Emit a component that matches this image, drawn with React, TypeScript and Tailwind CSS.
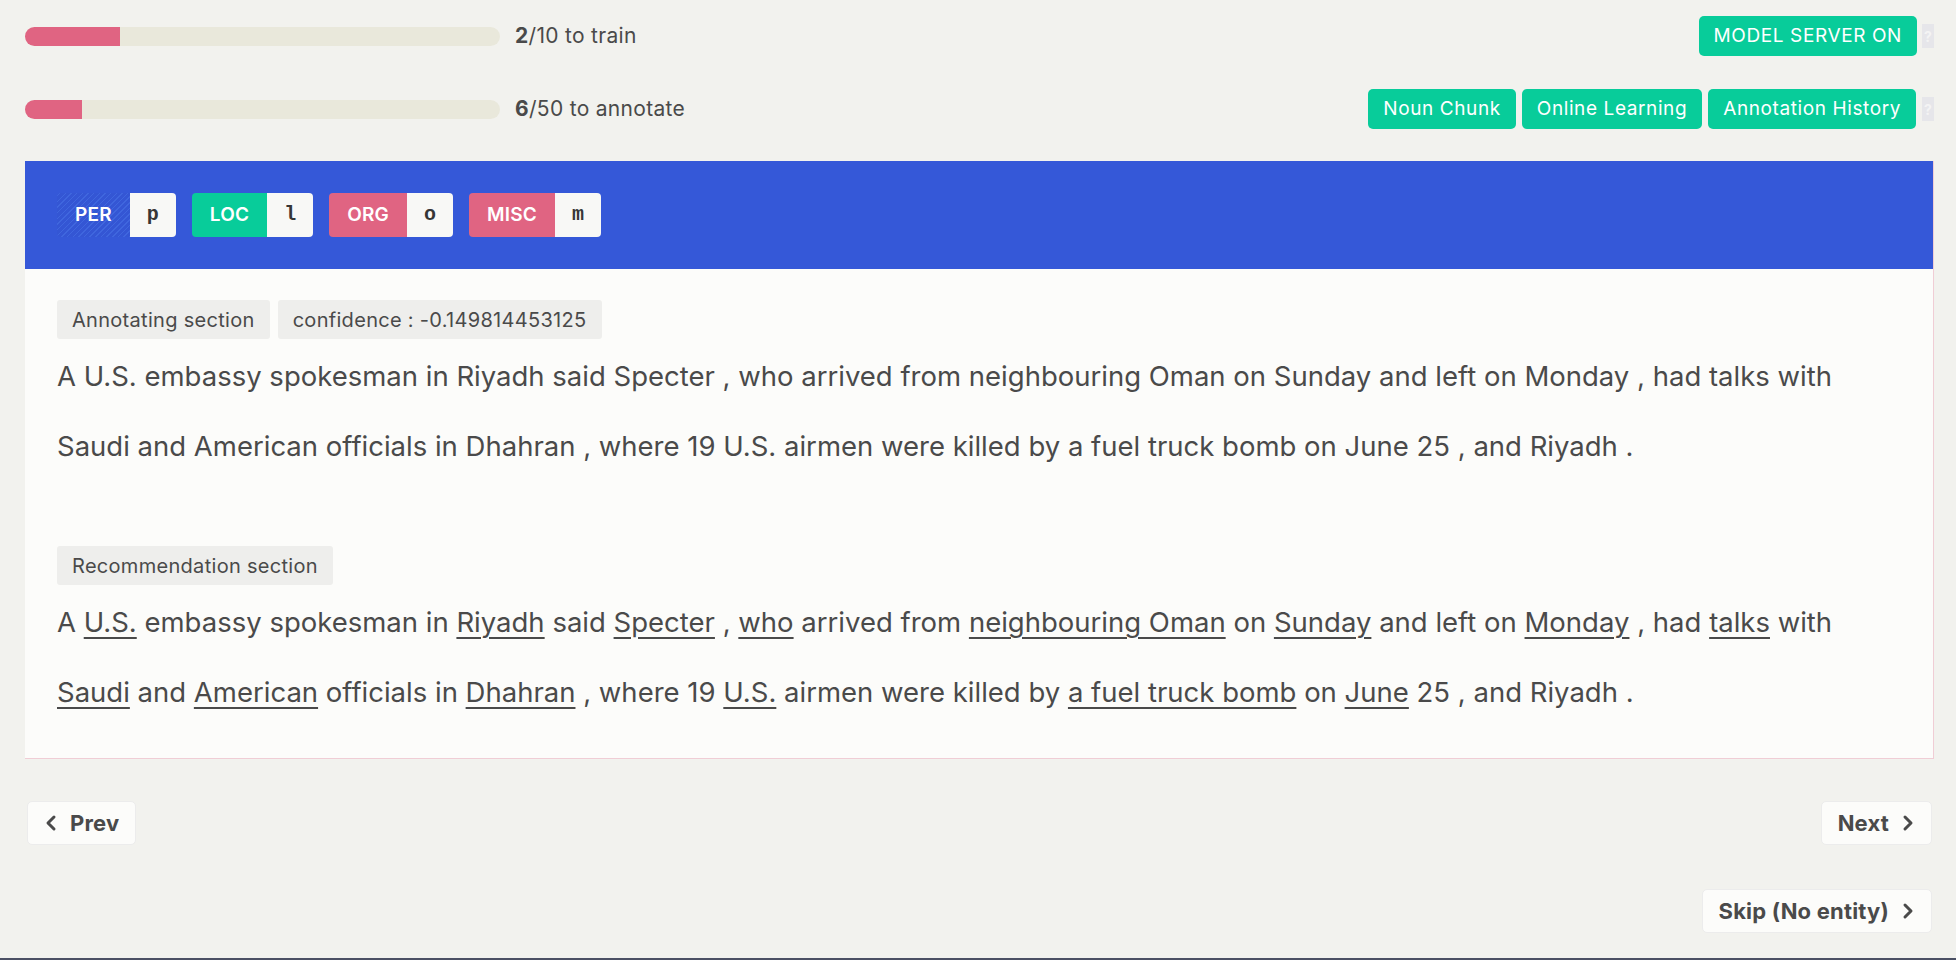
import React from 'react';

type Seg = [string, boolean];

const labels = [
  { name: 'PER', key: 'p', bg: 'bg-[repeating-linear-gradient(-45deg,#3f66de_0px,#3f66de_1px,#3456d4_1px,#3456d4_4px)]' },
  { name: 'LOC', key: 'l', bg: 'bg-[#08cc9a]' },
  { name: 'ORG', key: 'o', bg: 'bg-[#e06482]' },
  { name: 'MISC', key: 'm', bg: 'bg-[#e06482]' },
];

const plainLines = [
  'A U.S. embassy spokesman in Riyadh said Specter , who arrived from neighbouring Oman on Sunday and left on Monday , had talks with',
  'Saudi and American officials in Dhahran , where 19 U.S. airmen were killed by a fuel truck bomb on June 25 , and Riyadh .',
];

const recLines: Seg[][] = [
  [
    ['A ', false],
    ['U.S.', true],
    [' embassy spokesman in ', false],
    ['Riyadh', true],
    [' said ', false],
    ['Specter', true],
    [' , ', false],
    ['who', true],
    [' arrived from ', false],
    ['neighbouring Oman', true],
    [' on ', false],
    ['Sunday', true],
    [' and left on ', false],
    ['Monday', true],
    [' , had ', false],
    ['talks', true],
    [' with', false],
  ],
  [
    ['Saudi', true],
    [' and ', false],
    ['American', true],
    [' officials in ', false],
    ['Dhahran', true],
    [' , where 19 ', false],
    ['U.S.', true],
    [' airmen were killed by ', false],
    ['a fuel truck bomb', true],
    [' on ', false],
    ['June', true],
    [' 25 , and Riyadh .', false],
  ],
];

const ProgressRow: React.FC<{ done: number; total: number; label: string; pct: number }> = ({ done, total, label, pct }) => (
  <div className="flex items-center gap-[15px]">
    <div className="h-[19px] w-[475px] overflow-hidden rounded-full bg-[#e9e8db]">
      <div className="h-full bg-[#e06482]" style={{ width: `${pct}%` }} />
    </div>
    <span className="text-[21px] tracking-[0.3px] text-[#4a4a4a]">
      <b className="font-bold">{done}</b>/{total} {label}
    </span>
  </div>
);

const GreenButton: React.FC<{ children: React.ReactNode }> = ({ children }) => (
  <button className="h-[40px] rounded-[5px] bg-[#08cc9a] px-[15px] text-[19px] tracking-[0.6px] text-white">{children}</button>
);

const Help: React.FC = () => (
  <span className="flex h-[24px] w-[12px] items-center justify-center bg-[#e6e6ea] text-[14px] font-bold text-[#f4f4f4]">?</span>
);

const Tag: React.FC<{ children: React.ReactNode }> = ({ children }) => (
  <span className="inline-flex h-[39px] items-center rounded-[3px] bg-[#eeeeec] px-[15px] text-[20px] tracking-[0.3px] text-[#4a4a4a]">
    {children}
  </span>
);

const Chevron: React.FC<{ dir: 'left' | 'right' }> = ({ dir }) => (
  <svg width="14" height="18" viewBox="0 0 14 18" fill="none">
    <path
      d={dir === 'left' ? 'M10 3 L4 9 L10 15' : 'M4 3 L10 9 L4 15'}
      stroke="#4a4a4a"
      strokeWidth="3"
      strokeLinecap="round"
      strokeLinejoin="round"
    />
  </svg>
);

const NavButton: React.FC<{ children: React.ReactNode }> = ({ children }) => (
  <button className="flex h-[44px] items-center gap-[12px] rounded-[5px] border border-[#ececec] bg-[#fcfcfa] px-[16px] text-[22px] font-bold tracking-[0.2px] text-[#4a4a4a]">
    {children}
  </button>
);

export default function App() {
  return (
    <div className="relative min-h-screen w-[1956px] bg-[#f2f2ee] pl-[25px] pr-[22px] pt-[16px] font-['Inter','Roboto',sans-serif]">
      <div className="flex items-center justify-between">
        <ProgressRow done={2} total={10} label="to train" pct={20} />
        <div className="flex items-center gap-[5px]">
          <GreenButton>MODEL SERVER ON</GreenButton>
          <Help />
        </div>
      </div>
      <div className="mt-[33px] flex items-center justify-between">
        <ProgressRow done={6} total={50} label="to annotate" pct={12} />
        <div className="flex items-center gap-[6px]">
          <GreenButton>Noun Chunk</GreenButton>
          <GreenButton>Online Learning</GreenButton>
          <GreenButton>Annotation History</GreenButton>
          <Help />
        </div>
      </div>

      <div className="mt-[32px] border-b border-r border-[#f0cdd5] bg-[#fcfcfa]">
        <div className="flex gap-[16px] bg-[#3558d8] px-[32px] py-[32px]">
          {labels.map((l) => (
            <div key={l.name} className="flex h-[44px] overflow-hidden rounded-[4px]">
              <span className={`flex items-center px-[18px] text-[19px] font-semibold tracking-[0.2px] text-white ${l.bg}`}>{l.name}</span>
              <span className="flex w-[46px] items-center justify-center bg-[#f8f8f6] font-['Liberation_Mono',monospace] text-[20px] font-bold text-[#363636]">
                {l.key}
              </span>
            </div>
          ))}
        </div>

        <div className="px-[32px] pb-[31px] pt-[31px] text-[#4a4a4a]">
          <div className="flex gap-[8px]">
            <Tag>Annotating section</Tag>
            <Tag>confidence : -0.149814453125</Tag>
          </div>
          <div className="mt-[2px] text-[27.5px] leading-[70px]">
            {plainLines.map((line) => (
              <div key={line} className="whitespace-pre">{line}</div>
            ))}
          </div>

          <div className="mt-[65px]">
            <Tag>Recommendation section</Tag>
          </div>
          <div className="mt-[2px] text-[27.5px] leading-[70px]">
            {recLines.map((line, i) => (
              <div key={i} className="whitespace-pre">
                {line.map(([t, u], j) =>
                  u ? (
                    <span key={j} className="underline decoration-[1.5px] underline-offset-[5px]">{t}</span>
                  ) : (
                    <span key={j}>{t}</span>
                  )
                )}
              </div>
            ))}
          </div>
        </div>
      </div>

      <div className="mt-[42px] flex justify-between pl-[2px] pr-[2px]">
        <NavButton>
          <Chevron dir="left" />
          Prev
        </NavButton>
        <NavButton>
          Next
          <Chevron dir="right" />
        </NavButton>
      </div>
      <div className="mt-[44px] flex justify-end pr-[2px]">
        <NavButton>
          Skip (No entity)
          <Chevron dir="right" />
        </NavButton>
      </div>

      <div className="absolute bottom-0 left-0 h-[2px] w-full bg-[#4b5064]" />
    </div>
  );
}
